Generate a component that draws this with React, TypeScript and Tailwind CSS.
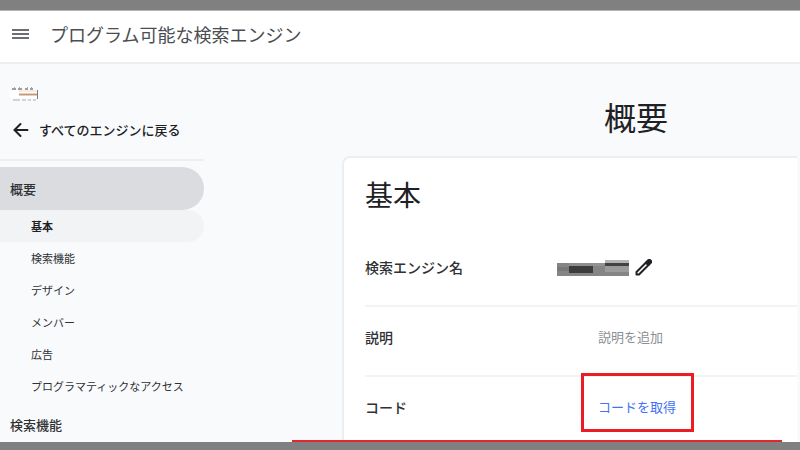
import type { ReactNode } from "react"

const subItems = [
  { label: "基本", active: true },
  { label: "検索機能" },
  { label: "デザイン" },
  { label: "メンバー" },
  { label: "広告" },
  { label: "プログラマティックなアクセス" },
]

function Header() {
  return (
    <header className="flex h-[53px] shrink-0 items-center gap-[21px] border-b-2 border-[#eeeeef] bg-white pb-1.5 pl-3">
      <button type="button" aria-label="メニュー" className="text-[#6b6f74]">
        <svg width="17" height="12" viewBox="0 0 17 12" fill="currentColor">
          <path d="M0 1h17v2H0zM0 5h17v2H0zM0 9h17v2H0z" />
        </svg>
      </button>
      <span className="text-lg leading-6 text-[#4a4d51]">プログラム可能な検索エンジン</span>
    </header>
  )
}

function MaskedEngine() {
  return (
    <svg className="ml-2.5 block" width="30" height="16" viewBox="0 0 30 16">
      <path d="M2 3h4M8 3h4M15 3h3M20 3h3" stroke="#7d8186" strokeWidth="1.5" />
      <path d="M4 1.5h1M9 1.5h1M17 1.5h1M21 1.5h1" stroke="#a9adb1" />
      <path d="M3 14h7M12 14h4M18 14h3M23 14h3" stroke="#c4c7ca" strokeWidth="1.5" />
      <path d="M0 5h27v7H0z" fill="#fff" />
      <path d="M9 4h18v2H9z" fill="#f9ecdc" />
      <path d="M9 8.5h18" stroke="#c99a78" strokeWidth="2" />
      <path d="M27.5 4v9" stroke="#77818c" />
    </svg>
  )
}

function Sidebar() {
  return (
    <nav className="w-[204px] shrink-0 pt-[22px] text-[13px] font-medium text-[#303134]">
      <MaskedEngine />
      <a href="#engines" className="mt-[18px] flex h-5 items-center gap-2.5 pl-3 text-[#202124]">
        <svg width="17" height="16" viewBox="0 0 17 16" fill="none" stroke="currentColor" strokeWidth="2" strokeLinecap="round">
          <path d="M15.500 8H3M8.500 2 2.500 8l6 6" />
        </svg>
        すべてのエンジンに戻る
      </a>
      <hr className="mt-[19px] border-t-2 border-[#eceef0]" />
      <a href="#overview" className="mt-1.5 flex h-[43px] items-center rounded-r-full bg-[#dadce0] pl-2.5">
        概要
      </a>
      <ul className="text-[11px] font-normal">
        {subItems.map((item) => (
          <li key={item.label}>
            <a
              href={`#${item.label}`}
              className={`flex h-8 items-center rounded-r-full pl-[31px] ${
                item.active ? "bg-[#f1f3f4] font-bold text-[#202124]" : ""
              }`}
            >
              {item.label}
            </a>
          </li>
        ))}
      </ul>
      <a href="#search" className="flex h-[46px] items-center pl-2.5">
        検索機能
      </a>
    </nav>
  )
}

function Row({ label, children }: { label: string; children: ReactNode }) {
  return (
    <div className="flex border-b-2 border-[#f1f3f4] pt-5 pb-7 leading-5">
      <dt className="w-48 shrink-0 text-sm font-medium text-[#303134]">{label}</dt>
      <dd className="flex items-center text-[13px]">{children}</dd>
    </div>
  )
}

function MaskedName() {
  return (
    <svg width="72" height="20" viewBox="0 0 72 20" shapeRendering="crispEdges">
      <path d="M0 6h72v13H0z" fill="#858585" />
      <path d="M0 10h12v4H0z" fill="#787878" />
      <path d="M12 6h24v3H12z" fill="#8e8e8e" />
      <path d="M12 9h24v7H12z" fill="#3c3c3c" />
      <path d="M36 6h12v3H36z" fill="#929292" />
      <path d="M48 3h24v3H48z" fill="#b5b5b5" />
      <path d="M48 6h24v3H48z" fill="#424242" />
      <path d="M48 9h24v6H48z" fill="#9b9b9b" />
    </svg>
  )
}

function PencilIcon() {
  return (
    <svg width="18" height="20" viewBox="0 0 18 20" stroke="#202124" strokeLinejoin="round">
      <path d="M1.5 15 11 5.5l2.500 2.500L4 17.500H1.500z" fill="none" strokeWidth="2" />
      <path d="M11 5.500 13.500 3H15l1 1v1.500L13.500 8z" fill="#202124" strokeWidth="2" />
    </svg>
  )
}

export default function App() {
  return (
    <div className="flex h-screen flex-col bg-[#808080] pt-[10px] pb-2 font-['Noto_Sans_CJK_JP',sans-serif]">
      <div className="relative flex min-h-0 flex-1 flex-col overflow-hidden border-t border-[#b5b5b5] bg-[#f8f9fa]">
        <Header />
        <div className="flex min-h-0 flex-1 overflow-hidden bg-[#f8fafc]">
          <Sidebar />
          <main className="min-w-0 flex-1 pl-[138px] pr-[3px] text-[#202124]">
            <h1 className="pt-[30px] pl-[262px] text-[32px] leading-[44px]">概要</h1>
            <section className="mt-[18px] rounded-tl-lg border-t-2 border-l-2 border-[#eceef1] bg-white pl-[21px]">
              <h2 className="pt-4 text-[28px] leading-10">基本</h2>
              <dl className="mt-[23px]">
                <Row label="検索エンジン名">
                  <MaskedName />
                  <button type="button" aria-label="名前を編集" className="ml-1.5">
                    <PencilIcon />
                  </button>
                </Row>
                <Row label="説明">
                  <button type="button" className="ml-[41px] text-[#8b8f94]">
                    説明を追加
                  </button>
                </Row>
                <Row label="コード">
                  <button type="button" className="relative ml-[41px] text-[#4272f5]">
                    コードを取得
                    <span className="absolute -top-6 -right-[18px] -bottom-[15px] -left-[17px] border-3 border-[#ed1c24]" />
                  </button>
                </Row>
              </dl>
            </section>
          </main>
        </div>
        <div className="absolute right-[18px] bottom-0 left-[292px] h-0.5 bg-[#e5262e]" />
      </div>
    </div>
  )
}
